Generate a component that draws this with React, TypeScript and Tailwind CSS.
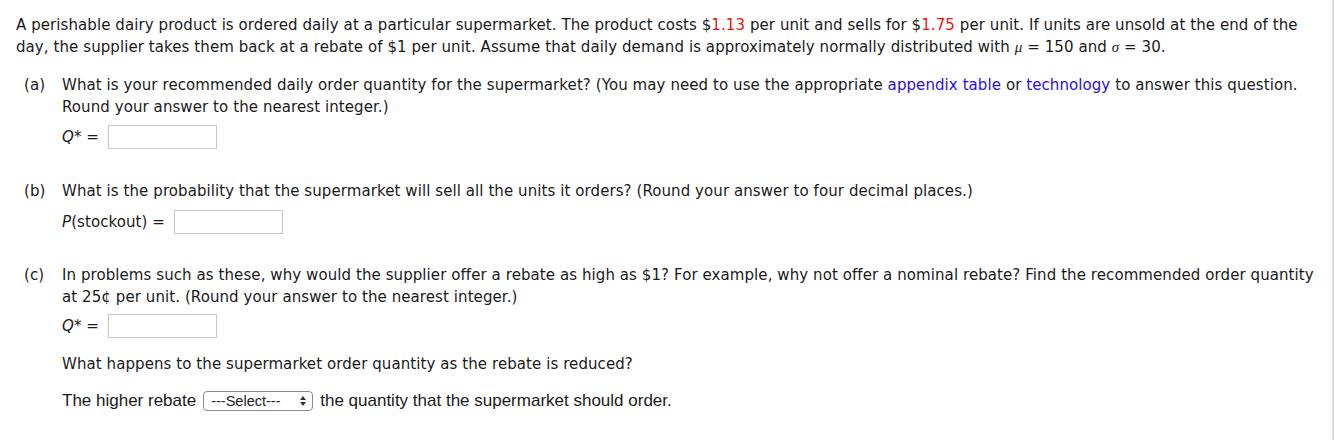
const verdana = "font-['Verdana','DejaVu_Sans',sans-serif]";

function Answer() {
  return <span className="inline-block w-[109px] h-[24px] border border-[#c8c8c8] bg-white align-middle" />;
}

function Part({ label, children }: { label: string; children: React.ReactNode }) {
  return (
    <div className="flex pl-[8px]">
      <span className="w-[38px] shrink-0">{label}</span>
      <div className="flex-1">{children}</div>
    </div>
  );
}

function SelectBox() {
  return (
    <span className="inline-flex items-center justify-between w-[110px] h-[20px] border border-[#8a8a8a] rounded-[4px] pl-[7px] pr-[5px] text-[14.5px] leading-none text-[#222] tracking-normal">
      ---Select---
      <svg width="8" height="12" viewBox="0 0 8 12" className="text-[#333]">
        <path d="M4 1 L7 5 L1 5 Z" fill="currentColor" />
        <path d="M4 11 L7 7 L1 7 Z" fill="currentColor" />
      </svg>
    </span>
  );
}

export default function App() {
  return (
    <div className="w-[1335px] h-[440px] bg-white flex">
      <div className={`flex-1 ${verdana} text-[15px] leading-[22px] tracking-[0.08px] text-[#1a1a1a] pl-[16px] pt-[14px] pr-[12px]`}>
        <p>
          A perishable dairy product is ordered daily at a particular supermarket. The product costs $
          <span className="text-[#e8160c]">1.13</span> per unit and sells for $<span className="text-[#e8160c]">1.75</span> per
          unit. If units are unsold at the end of the day, the supplier takes them back at a rebate of $1 per unit. Assume
          that daily demand is approximately normally distributed with{" "}
          <i className="font-['Liberation_Serif',serif]">μ</i> = 150 and <i className="font-['Liberation_Serif',serif]">σ</i> = 30.
        </p>

        <div className="mt-[16px]">
          <Part label="(a)">
            <p>
              What is your recommended daily order quantity for the supermarket? (You may need to use the appropriate{" "}
              <span className="text-[#2a0ee0]">appendix table</span> or <span className="text-[#2a0ee0]">technology</span> to
              answer this question. Round your answer to the nearest integer.)
            </p>
            <div className="mt-[7px] flex items-center gap-[9px]">
              <span>
                <i>Q</i>* =
              </span>
              <Answer />
            </div>
          </Part>
        </div>

        <div className="mt-[31px]">
          <Part label="(b)">
            <p>What is the probability that the supermarket will sell all the units it orders? (Round your answer to four decimal places.)</p>
            <div className="mt-[8px] flex items-center gap-[9px]">
              <span>
                <i>P</i>(stockout) =
              </span>
              <Answer />
            </div>
          </Part>
        </div>

        <div className="mt-[30px]">
          <Part label="(c)">
            <p>
              In problems such as these, why would the supplier offer a rebate as high as $1? For example, why not offer a
              nominal rebate? Find the recommended order quantity at 25¢ per unit. (Round your answer to the nearest integer.)
            </p>
            <div className="mt-[6px] flex items-center gap-[9px]">
              <span>
                <i>Q</i>* =
              </span>
              <Answer />
            </div>
            <p className="mt-[15px]">What happens to the supermarket order quantity as the rebate is reduced?</p>
            <div className="mt-[15px] flex items-center gap-[7px] font-['Liberation_Sans',Arial,sans-serif] text-[17px] tracking-normal">
              <span>The higher rebate</span>
              <SelectBox />
              <span>the quantity that the supermarket should order.</span>
            </div>
          </Part>
        </div>
      </div>
      <div className="w-[2px] h-full bg-[#dcdcdc]" />
      <div className="w-[1px]" />
    </div>
  );
}
